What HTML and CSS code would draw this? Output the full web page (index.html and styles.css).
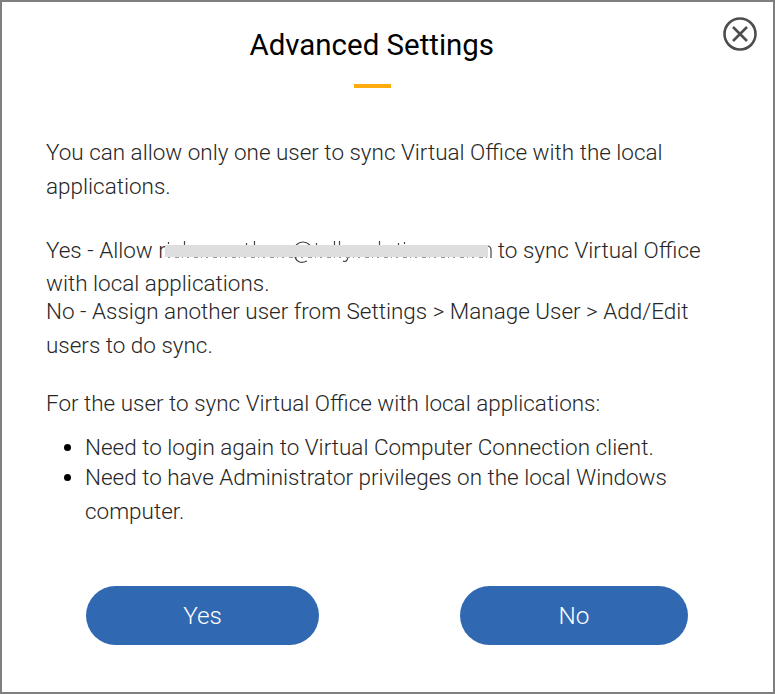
FILE: index.html
```html
<!DOCTYPE html>
<html lang="en"><head><meta charset="utf-8"><title>Advanced Settings</title><link rel="stylesheet" href="styles.css"></head>
<body>
<main class="dialog">
<header><h1>Advanced Settings</h1><div class="accent"></div>
<button class="close" aria-label="Close"><svg viewBox="0 0 36 36" width="36" height="36"><circle cx="18" cy="18" r="15.5"/><path d="M11 11l14 14M25 11l-14 14"/></svg></button></header>
<section class="copy">
<p class="intro">You can allow only one user to sync Virtual Office with the local<br>applications.</p>
<p class="yes">Yes - Allow r<span class="masked"><svg viewBox="165 240 328 24" width="328" height="24"><path d="M168.5 242v2M184.5 241v4M246.5 243v2M254.5 241v4M316.5 243v2M334.5 241v4M339.5 241v4M379.5 241v4M398.5 243v2M404.5 242v2M296 245q7-6 14 0M295 257q3 8 12 4M348 257q-1 6-5 4M487 246q4 0 4 4v8"/><path class="tips" d="M168 257.5h320"/><rect x="165" y="245" width="323" height="12"/></svg></span> to sync Virtual Office<br>with local applications.</p>
<p class="no">No - Assign another user from Settings &gt; Manage User &gt; Add/Edit<br>users to do sync.</p>
<p class="for">For the user to sync Virtual Office with local applications:</p>
<ul><li>Need to login again to Virtual Computer Connection client.</li><li>Need to have Administrator privileges on the local Windows<br>computer.</li></ul>
</section>
<footer><button class="action action-yes">Yes</button><button class="action action-no">No</button></footer>
</main>
</body></html>
```
FILE: styles.css
```css
*{box-sizing:border-box}
body{margin:0;font-family:Roboto,sans-serif;background:#fff;color:#000}
.dialog{height:694px;border:2px solid #7f7f7f;position:relative}
header{height:132px;padding-top:25px}
h1{margin:0 0 0 247.5px;font-size:29.45px;line-height:36px;font-weight:400;white-space:nowrap}
.accent{width:37px;height:4px;background:#ffaa0d;margin:21px 0 0 352px}
.close{position:absolute;right:15px;top:14px;padding:0;border:0;background:none;width:36px;height:36px}
.close svg{display:block;fill:none;stroke:#4d4d4d;stroke-width:2.6}
.copy{padding:1px 0 0 44px;font-size:22.47px;font-weight:300;line-height:34px;white-space:nowrap;height:452px;color:#262626}
p,ul{margin:0}
.yes{margin-top:31px;line-height:33px}
.no{margin-top:-6px}
.for{margin-top:24px}
.masked{display:inline-block;position:relative;width:326.5px;height:1px}
.masked svg{position:absolute;left:-1px;bottom:-6px;fill:none;stroke:#444;stroke-width:1.2}
.masked .tips{stroke:#999;stroke-width:1;stroke-dasharray:2 5 4 3 1 4}
.masked rect{fill:#dedede;stroke:none}
ul{margin-top:12px;padding-left:39px;line-height:30px}
li::marker{color:#000}
li:last-child{line-height:34px;margin-top:-2px}
footer{display:flex;padding-left:84px;gap:141px}
.action{height:59px;width:233px;border:0;border-radius:30px;background:#3069b2;color:#fff;font:300 24.3px Roboto,sans-serif;padding:0}
.action-no{width:228px}
```
